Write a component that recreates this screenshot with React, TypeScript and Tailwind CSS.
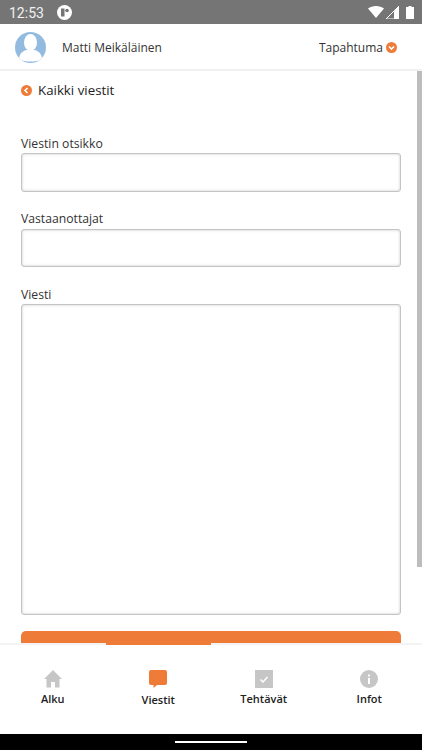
const font = { fontFamily: '"Open Sans", sans-serif' }

function StatusBar() {
    return (
        <div className="flex h-6 shrink-0 items-center justify-between bg-[#757575] pl-[9px] pr-[8px]">
            <div className="flex items-center gap-[13px]">
                <span className="pt-[2px] font-['Roboto',sans-serif] text-[14px] text-[#f1f1f1]">12:53</span>
                <svg width="15" height="15" viewBox="0 0 15 15">
                    <circle cx="7.5" cy="7.5" r="7.5" fill="#fff" />
                    <rect x="4" y="3.5" width="3.5" height="8" fill="#757575" />
                    <circle cx="10" cy="5.5" r="1.8" fill="#757575" />
                </svg>
            </div>
            <div className="flex items-center gap-[2px]">
                <svg width="16" height="12" viewBox="0 0 16 12">
                    <path d="M0 2.5C2 .9 5 0 8 0s6 .9 8 2.500L8 12z" fill="#fff" />
                </svg>
                <svg width="13" height="13" viewBox="0 0 13 13">
                    <path d="M13 0v13H0z" fill="none" stroke="#fff" />
                    <path d="M8 5.500V13H13V0z" fill="#fff" />
                </svg>
                <svg className="ml-[5px]" width="8" height="13" viewBox="0 0 8 13">
                    <path d="M2.500 0h3v1H8v12H0V1h2.500z" fill="#fff" />
                </svg>
            </div>
        </div>
    )
}

function Avatar() {
    return (
        <svg width="31" height="31" viewBox="0 0 31 31">
            <defs>
                <clipPath id="avatar-clip">
                    <circle cx="15.500" cy="15.500" r="15.500" />
                </clipPath>
            </defs>
            <circle cx="15.500" cy="15.500" r="15.500" fill="#93bbe0" />
            <g clipPath="url(#avatar-clip)" fill="#fff">
                <ellipse cx="15.500" cy="10.500" rx="6.500" ry="8.500" />
                <path d="M4 27.500c0-6 4-9 8-9.500h7c4 .5 8 3.500 8 9.500-3 1.500-7 2-11.500 2S7 29 4 27.500z" />
            </g>
        </svg>
    )
}

function RoundChevron({ direction }: { direction: "left" | "down" }) {
    return (
        <svg width="11" height="11" viewBox="0 0 11 11">
            <circle cx="5.500" cy="5.500" r="5.500" fill="#ef7b39" />
            <path
                d={direction === "left" ? "M6.500 3 4 5.500 6.500 8" : "M3 4.500 5.500 7 8 4.500"}
                fill="none"
                stroke="#fff"
                strokeWidth="1.600"
            />
        </svg>
    )
}

function Field({ label, box, top }: { label: string; box: string; top: string }) {
    return (
        <div className={top}>
            <label className="block text-[12.2px] leading-[18px] text-[#333]">{label}</label>
            <div className={`w-full rounded-[3px] border border-[#c4c4c4] bg-white shadow-[inset_0_0_3px_#c8c8c8] ${box}`} />
        </div>
    )
}

const tabs = [
    { name: "Alku", icon: "home" },
    { name: "Viestit", icon: "chat" },
    { name: "Tehtävät", icon: "check" },
    { name: "Infot", icon: "info" },
]

function TabIcon({ icon }: { icon: string }) {
    if (icon === "home") {
        return (
            <svg width="18" height="18" viewBox="0 0 18 18">
                <path d="M9 0 18 9h-2.500v8.500H11V12H7v5.500H2.500V9H0z" fill="#c6c6c6" />
            </svg>
        )
    }
    if (icon === "chat") {
        return (
            <svg width="18" height="18" viewBox="0 0 18 18">
                <path d="M2 0h14a2 2 0 0 1 2 2v11a2 2 0 0 1-2 2H8l-3.500 3v-3H2a2 2 0 0 1-2-2V2a2 2 0 0 1 2-2z" fill="#ef7b39" />
            </svg>
        )
    }
    if (icon === "check") {
        return (
            <svg width="18" height="18" viewBox="0 0 18 18">
                <rect width="18" height="18" fill="#c6c6c6" />
                <path d="M5.500 9.500 8 12l4.500-5" fill="none" stroke="#fff" strokeWidth="1.500" />
            </svg>
        )
    }
    return (
        <svg width="18" height="18" viewBox="0 0 18 18">
            <circle cx="9" cy="9" r="9" fill="#c6c6c6" />
            <rect x="8" y="8" width="2" height="6" fill="#fff" />
            <rect x="8" y="4.500" width="2" height="2" fill="#fff" />
        </svg>
    )
}

export default function App() {
    return (
        <div className="flex h-[750px] w-[422px] flex-col overflow-hidden bg-white" style={font}>
            <StatusBar />

            <header className="flex h-[47px] shrink-0 items-center justify-between border-b-2 border-[#f1f1f1] pl-[15px] pr-[25px] pt-[2px]">
                <div className="flex items-center gap-4">
                    <Avatar />
                    <span className="text-[12px] text-[#333]">Matti Meikäläinen</span>
                </div>
                <div className="flex items-center gap-[3px]">
                    <span className="text-[12px] text-[#333]">Tapahtuma</span>
                    <RoundChevron direction="down" />
                </div>
            </header>

            <div className="relative min-h-0 flex-1 overflow-hidden">
                <div className="absolute right-0 top-0 h-[496px] w-[5px] bg-[#bdbdbd]" />
                <main className="pl-[21px] pr-[21px] pt-[9px]">
                    <div className="flex items-center gap-[6px]">
                        <RoundChevron direction="left" />
                        <span className="text-[13.3px] leading-[20px] text-[#222]">Kaikki viestit</span>
                    </div>

                    <Field label="Viestin otsikko" box="h-[39px]" top="mt-[35px]" />
                    <Field label="Vastaanottajat" box="mt-[1px] h-[38px]" top="mt-[18px]" />
                    <Field label="Viesti" box="h-[311px]" top="mt-[19px]" />

                    <button className="mt-4 h-[44px] w-full rounded-t-[5px] bg-[#ef7b39]" />
                </main>
            </div>

            <nav className="flex h-[91px] shrink-0 bg-white">
                {tabs.map((tab) => {
                    const active = tab.name === "Viestit"
                    return (
                        <div
                            key={tab.name}
                            className={`flex flex-1 flex-col items-center border-t-2 ${active ? "border-[#ef7b39]" : "border-[#f3f3f3]"}`}
                        >
                            <div className="mt-[25px]">
                                <TabIcon icon={tab.icon} />
                            </div>
                            <span className={`text-[11px] font-semibold leading-[16px] text-[#222] ${active ? "mt-[4px]" : "mt-[3px]"}`}>
                                {tab.name}
                            </span>
                        </div>
                    )
                })}
            </nav>

            <div className="flex h-[16px] shrink-0 items-center justify-center bg-black">
                <div className="h-[2px] w-[72px] bg-white" />
            </div>
        </div>
    )
}
